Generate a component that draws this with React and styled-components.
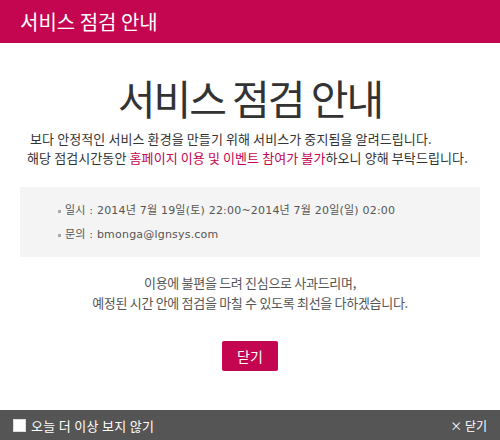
import React from "react";
import styled, { createGlobalStyle } from "styled-components";

const Global = createGlobalStyle`
  html, body { margin: 0; padding: 0; background: #fff; }
  body { font-family: "Noto Sans CJK KR", "Noto Sans", sans-serif; }
`;

const Popup = styled.div`
  width: 500px;
  height: 440px;
  display: flex;
  flex-direction: column;
  background: #fff;
`;

const Header = styled.header`
  height: 43px;
  background: #c4054f;
  color: #fff;
  display: flex;
  align-items: center;
  padding-left: 20px;
  font-size: 20px;
  font-weight: 400;
`;

const Body = styled.main`
  flex: 1;
  display: flex;
  flex-direction: column;
  align-items: center;
`;

const Title = styled.h1`
  margin: 24px 0 0;
  font-size: 41px;
  line-height: 60px;
  font-weight: 400;
  color: #333;
  letter-spacing: -2px;
`;

const Lead = styled.p`
  align-self: stretch;
  margin: 2px 0 0;
  padding-left: 27px;
  font-size: 13px;
  line-height: 19px;
  color: #333;
  text-align: left;
  letter-spacing: 0.1px;
  white-space: pre;
`;

const Em = styled.span`
  color: #c4054f;
`;

const InfoBox = styled.ul`
  list-style: none;
  align-self: stretch;
  margin: 20px 20px 0;
  padding: 12px 0 10px 38px;
  background: #f4f4f4;
  font-family: "DejaVu Sans", "Noto Sans CJK KR", sans-serif;
  font-size: 11px;
  color: #555;
  letter-spacing: 0.2px;
`;

const InfoItem = styled.li`
  line-height: 24px;
  display: flex;
  align-items: center;
  &::before {
    content: "";
    width: 3px;
    height: 3px;
    background: #aaa;
    margin-right: 4px;
  }
`;

const Closing = styled.p`
  margin: 16px 0 0;
  font-size: 13px;
  line-height: 20px;
  color: #555;
  text-align: center;
  letter-spacing: -0.3px;
`;

const CloseButton = styled.button`
  margin-top: 28px;
  width: 56px;
  height: 30px;
  border: none;
  border-radius: 2px;
  background: #c4054f;
  color: #fff;
  font-family: "Noto Sans CJK KR", sans-serif;
  font-size: 14px;
  cursor: pointer;
  padding: 0;
`;

const Footer = styled.footer`
  height: 30px;
  background: #555;
  color: #fff;
  display: flex;
  align-items: center;
  justify-content: space-between;
  padding: 0 13px;
  font-size: 13px;
`;

const Check = styled.label`
  display: flex;
  align-items: center;
  gap: 5px;
  letter-spacing: 0.3px;
`;

const Box = styled.span`
  width: 11px;
  height: 11px;
  background: #fff;
  border: 1px solid #ddd;
`;

const FooterClose = styled.span`
  display: flex;
  align-items: center;
  gap: 2px;
  font-size: 12px;
`;

export default function App() {
  return (
    <>
      <Global />
      <Popup>
        <Header>서비스 점검 안내</Header>
        <Body>
          <Title>서비스 점검 안내</Title>
          <Lead>
            {" 보다 안정적인 서비스 환경을 만들기 위해 서비스가 중지됨을 알려드립니다."}
            <br />
            해당 점검시간동안 <Em>홈페이지 이용 및 이벤트 참여가 불가</Em>하오니 양해 부탁드립니다.
          </Lead>
          <InfoBox>
            <InfoItem>일시 : 2014년 7월 19일(토) 22:00~2014년 7월 20일(일) 02:00</InfoItem>
            <InfoItem>문의 : bmonga@lgnsys.com</InfoItem>
          </InfoBox>
          <Closing>
            이용에 불편을 드려 진심으로 사과드리며,
            <br />
            예정된 시간 안에 점검을 마칠 수 있도록 최선을 다하겠습니다.
          </Closing>
          <CloseButton>닫기</CloseButton>
        </Body>
        <Footer>
          <Check>
            <Box />
            오늘 더 이상 보지 않기
          </Check>
          <FooterClose>× 닫기</FooterClose>
        </Footer>
      </Popup>
    </>
  );
}
